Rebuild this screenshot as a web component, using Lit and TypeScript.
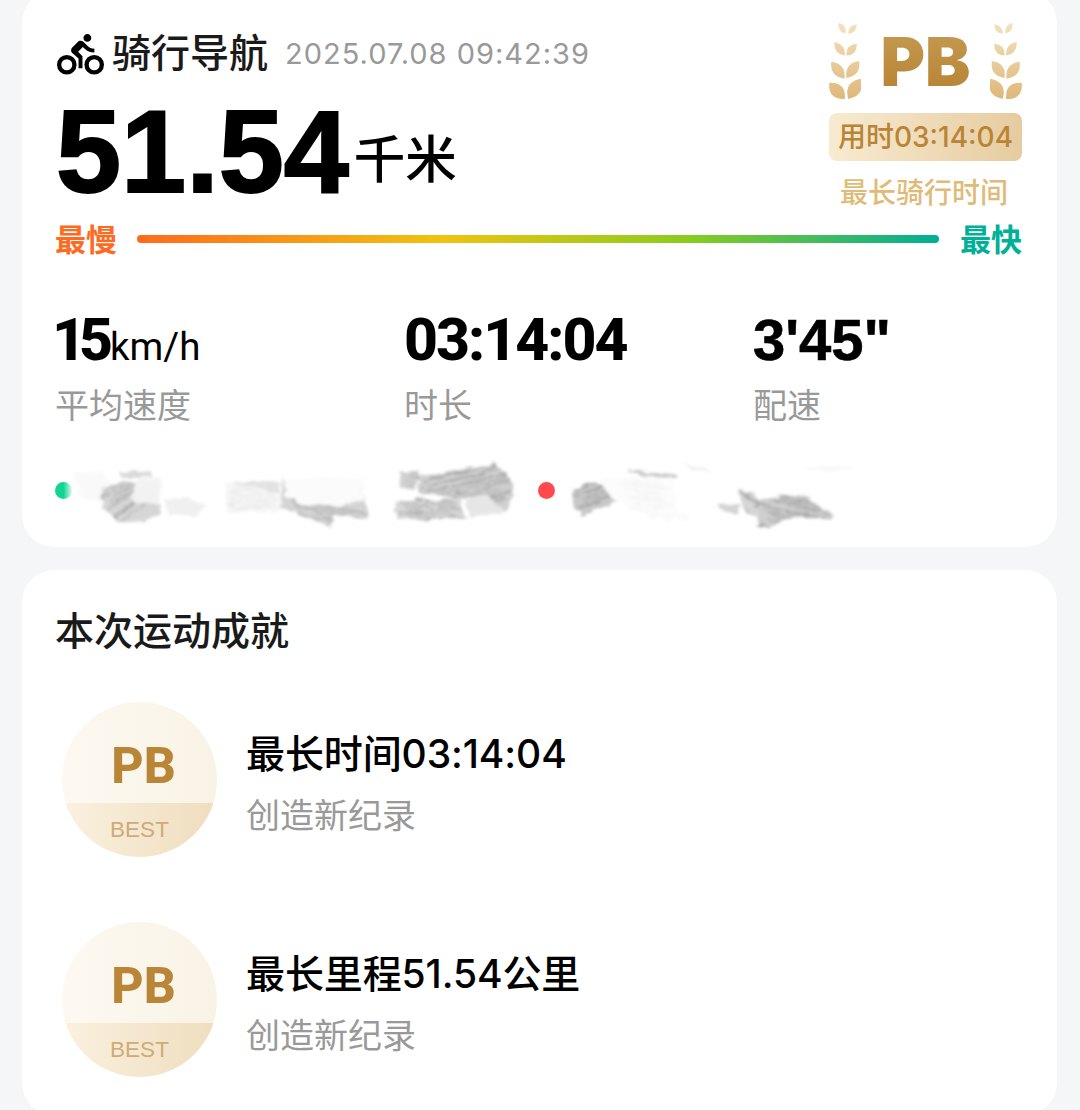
import { LitElement, html, css, svg } from "lit";
import { customElement } from "lit/decorators.js";

const leaf = (ax: number, ay: number, bx: number, by: number, w: number) => {
  const mx = (ax + bx) / 2, my = (ay + by) / 2;
  const dx = bx - ax, dy = by - ay;
  const l = Math.hypot(dx, dy);
  const nx = (-dy / l) * w, ny = (dx / l) * w;
  return `M${ax} ${ay}Q${mx + nx} ${my + ny} ${bx} ${by}Q${mx - nx} ${my - ny} ${ax} ${ay}Z`;
};

const leaves = [
  leaf(85, 40, 105, 72, 17),
  leaf(138, 45, 113, 73, 17),
  leaf(72, 97, 103, 137, 23),
  leaf(138, 102, 108, 137, 23),
  leaf(63, 155, 102, 205, 31),
  leaf(145, 153, 108, 203, 31),
  leaf(57, 217, 103, 265, 38),
  leaf(150, 205, 113, 265, 38),
].join("");

const wheat = (mirror: boolean, id: string) => html`
  <svg class="wheat ${mirror ? "flip" : ""}" viewBox="57 38 93 230">
    <defs>
      <linearGradient id=${id} x1="0" y1="0" x2="0" y2="1">
        <stop offset="0" stop-color="#f3e2bd"></stop>
        <stop offset="1" stop-color="#dfb87a"></stop>
      </linearGradient>
    </defs>
    <path d=${leaves} fill="url(#${id})"></path>
  </svg>
`;

type Patch = { p: string; f: string; h?: string; box?: number[]; s?: number };
const patches: Patch[] = [
  { p: "72,472 100,471 112,482 104,505 80,497", f: "#f9f9f9" },
  { p: "102,487 128,482 160,478 160,515 148,520 118,522 102,505", f: "#d6d6d6", h: "#afafaf", box: [100, 484, 160, 530], s: -0.7 },
  { p: "120,472 150,470 152,478 122,478", f: "#dadada" },
  { p: "134,480 160,478 160,503 134,503", f: "#f2f2f2" },
  { p: "165,500 190,497 210,506 195,516 168,514", f: "#f0f0f0" },
  { p: "225,484 280,481 281,512 226,512", f: "#f6f6f6", h: "#e8e8e8", box: [226, 484, 280, 512], s: -0.1 },
  { p: "228,482 278,481 280,494 262,488", f: "#e2e2e2" },
  { p: "282,478 360,478 368,512 368,520 335,515 330,526 280,506", f: "#d4d4d4", h: "#b0b0b0", box: [282, 498, 368, 524], s: 0.2 },
  { p: "284,478 360,477 364,500 345,506 300,504 285,496", f: "#fbfbfb" },
  { p: "400,470 420,470 415,490 400,489", f: "#d2d2d2", h: "#a9a9a9", box: [400, 470, 420, 490], s: 0.12 },
  { p: "394,502 420,500 460,498 465,518 396,520", f: "#d8d8d8", h: "#aaaaaa", box: [394, 500, 466, 520], s: 0.02 },
  { p: "418,476 450,472 495,463 512,482 514,490 507,512 480,515 475,500 418,494", f: "#d0d0d0", h: "#a8a8a8", box: [420, 470, 514, 520], s: -0.22 },
  { p: "465,498 488,495 505,512 470,518", f: "#e6e6e6" },
  { p: "572,490 592,482 612,490 616,502 582,516 575,510", f: "#c8c8c8", h: "#9f9f9f", box: [574, 484, 616, 520], s: -0.4 },
  { p: "600,480 672,476 678,512 640,512 614,500", f: "#fcfcfc", h: "#f2f2f2", box: [620, 480, 676, 510], s: 0.1 },
  { p: "626,470 675,474 675,478 640,477", f: "#c8c8c8" },
  { p: "684,464 710,468 712,472 692,470", f: "#f2f2f2" },
  { p: "716,503 740,505 738,514 718,511", f: "#d4d4d4" },
  { p: "737,488 752,492 770,510 760,518 744,510", f: "#d6d6d6", h: "#b0b0b0", box: [730, 486, 770, 500], s: 0.8 },
  { p: "760,498 800,495 835,514 832,521 795,516 770,528 758,526", f: "#cecece", h: "#a3a3a3", box: [758, 492, 836, 528], s: 0.22 },
  { p: "805,467 850,466 852,471 810,470", f: "#f8f8f8" },
  { p: "640,510 690,514 688,520 650,518", f: "#f9f9f9" },
];

const hatch = (x: Patch) => {
  if (!x.h || !x.box) return "";
  const [x0, y0, x1, y1] = x.box;
  let d = "";
  let seed = x0 * 7 + y0;
  for (let y = y0; y <= y1; y += 3) {
    seed = (seed * 31 + 17) % 101;
    const a = x0 + (seed % 14);
    const b = x1 - ((seed * 3) % 16);
    d += `M${a} ${y.toFixed(1)}L${b} ${(y + (b - a) * (x.s ?? 0)).toFixed(1)}`;
  }
  return d;
};

const track = html`
  <svg class="track" viewBox="55 455 805 75">
    <defs>
      <filter id="smear" x="-5%" y="-20%" width="110%" height="140%">
        <feTurbulence type="fractalNoise" baseFrequency="0.07 0.16" numOctaves="2" seed="4" result="n"></feTurbulence>
        <feDisplacementMap in="SourceGraphic" in2="n" scale="8" xChannelSelector="R" yChannelSelector="G" result="d"></feDisplacementMap>
        <feGaussianBlur in="d" stdDeviation="1.6"></feGaussianBlur>
      </filter>
      <linearGradient id="start" x1="0" y1="0" x2="1" y2="0">
        <stop offset="0.5" stop-color="#12d68f"></stop>
        <stop offset="1" stop-color="#12d68f" stop-opacity="0.15"></stop>
      </linearGradient>
      ${patches.map((x, i) => svg`<clipPath id=${"c" + i}><polygon points=${x.p}></polygon></clipPath>`)}
    </defs>
    <g filter="url(#smear)">
      ${patches.map(
        (x, i) => svg`
          <g clip-path=${"url(#c" + i + ")"}>
            <polygon points=${x.p} fill=${x.f}></polygon>
            <path d=${hatch(x)} stroke=${x.h ?? "none"} stroke-width="1.2" fill="none"></path>
          </g>
        `
      )}
    </g>
    <circle cx="63.5" cy="490.5" r="8.5" fill="url(#start)"></circle>
    <circle cx="546.5" cy="490.5" r="8.5" fill="#ff4a4d"></circle>
  </svg>
`;

const bike = html`
  <svg class="bike" viewBox="0 0 24 22.4">
    <path
      d="M15.5 5.5c1.1 0 2-.9 2-2s-.9-2-2-2-2 .9-2 2 .9 2 2 2zM10.8 10.5l2.4-2.4.8.8c1.3 1.3 3 2.1 5.1 2.1V9c-1.5 0-2.7-.6-3.6-1.5l-1.9-1.9c-.5-.4-1-.6-1.6-.6s-1.1.2-1.4.6L7.8 8.4c-.4.4-.6.9-.6 1.4 0 .6.2 1.1.6 1.4L11 14v5h2v-6.2l-2.2-2.3z"
      fill="#000"
    ></path>
    <circle cx="5" cy="17.2" r="3.9" fill="none" stroke="#000" stroke-width="2.2"></circle>
    <circle cx="19" cy="17.2" r="3.9" fill="none" stroke="#000" stroke-width="2.2"></circle>
  </svg>
`;

@customElement("app-root")
export class AppRoot extends LitElement {
  static styles = css`
    :host {
      display: block;
      width: 1080px;
      height: 1110px;
      overflow: hidden;
      background: #f5f6f8;
      font-family: Inter, "Noto Sans CJK SC", sans-serif;
      color: #000;
    }
    .page {
      display: flex;
      flex-direction: column;
      gap: 23px;
      padding: 0 23px 0 22px;
      margin-top: -9px;
    }
    .card {
      background: #fff;
      border-radius: 32px;
      padding: 0 35px 0 33px;
    }
    .summary {
      padding-top: 31px;
      height: 556px;
      box-sizing: border-box;
    }
    .top {
      display: flex;
      justify-content: space-between;
      height: 200px;
    }
    .head {
      display: flex;
      align-items: center;
      height: 46px;
      margin-top: 8px;
    }
    .bike {
      width: 47px;
      height: 44px;
      margin: 0 8px 0 2px;
      flex: none;
    }
    .name {
      font-size: 39px;
      font-weight: 500;
      line-height: 46px;
      color: #1a1a1a;
      white-space: nowrap;
    }
    .date {
      margin-left: 17px;
      font-size: 29px;
      line-height: 46px;
      color: #999;
      letter-spacing: 1px;
      white-space: nowrap;
      position: relative;
      top: 1px;
    }
    .dist {
      display: flex;
      align-items: baseline;
      margin-top: 21px;
      height: 110px;
    }
    .num {
      font-family: "Liberation Sans", sans-serif;
      font-size: 117px;
      font-weight: 700;
      font-kerning: none;
      line-height: 110px;
      -webkit-text-stroke: 2px #000;
      margin-left: 1px;
    }
    .unit {
      font-size: 51.5px;
      font-weight: 500;
      line-height: 50px;
      margin-left: 5px;
      position: relative;
      top: -14px;
    }
    .pb {
      width: 193px;
      display: flex;
      flex-direction: column;
      align-items: center;
    }
    .crest {
      width: 193px;
      height: 78px;
      display: flex;
      justify-content: space-between;
      align-items: center;
    }
    .wheat {
      width: 32px;
      height: 78px;
      flex: none;
    }
    .flip {
      transform: scaleX(-1);
    }
    .pbt {
      font-family: Inter, sans-serif;
      font-size: 68px;
      font-weight: 900;
      line-height: 78px;
      background: linear-gradient(180deg, #c69c56, #b5812f);
      -webkit-background-clip: text;
      background-clip: text;
      color: transparent;
    }
    .used {
      width: 193px;
      height: 48px;
      margin-top: 13px;
      border-radius: 8px;
      background: linear-gradient(90deg, #f8ebd1, #e6cb9f);
      color: #b98436;
      font-size: 28px;
      font-weight: 500;
      line-height: 48px;
      text-align: center;
      white-space: nowrap;
    }
    .best {
      margin: 15px 3px 0 0;
      color: #e0bb78;
      font-size: 28px;
      font-weight: 500;
      line-height: 34px;
      white-space: nowrap;
    }
    .scale {
      display: flex;
      align-items: center;
      justify-content: space-between;
      height: 34px;
      font-size: 31px;
      font-weight: 700;
      line-height: 34px;
    }
    .scale span {
      position: relative;
      top: 1px;
    }
    .slow { color: #ff6a22; }
    .fast { color: #00b097; }
    .bar {
      width: 802px;
      height: 8px;
      margin-right: 1px;
      border-radius: 4px;
      background: linear-gradient(90deg, #ff6a1c 0%, #f0c30f 38%, #8ccc1e 68%, #00ae96 100%);
    }
    .stats {
      display: grid;
      grid-template-columns: 349px 349px 1fr;
      margin-top: 54px;
    }
    .val {
      height: 60px;
      font-family: Roboto, sans-serif;
      font-size: 59px;
      font-weight: 800;
      line-height: 60px;
      letter-spacing: -2px;
      white-space: nowrap;
    }
    .val b {
      font-weight: 800;
      letter-spacing: -7px;
      margin: 0 4px 0 -3px;
    }
    .val small {
      font-family: Roboto, sans-serif;
      font-size: 38.5px;
      font-weight: 400;
      letter-spacing: 0;
    }
    .val.pace {
      font-family: "Liberation Sans", sans-serif;
      font-size: 58px;
      font-weight: 700;
      letter-spacing: 0;
      -webkit-text-stroke: 0.6px #000;
    }
    .lab {
      margin-top: 13px;
      font-size: 34px;
      line-height: 46px;
      color: #999;
    }
    .track {
      display: block;
      width: 805px;
      height: 75px;
      margin-top: 26px;
    }
    .ach {
      height: 545px;
      padding-top: 36px;
      box-sizing: border-box;
    }
    .ach h2 {
      margin: 0;
      font-size: 39px;
      font-weight: 500;
      line-height: 50px;
      color: #1a1a1a;
    }
    .list {
      display: flex;
      flex-direction: column;
      gap: 65px;
      margin: 46px 0 0 7px;
    }
    .item {
      display: flex;
      align-items: flex-start;
      gap: 29px;
    }
    .medal {
      width: 155px;
      height: 155px;
      flex: none;
      border-radius: 50%;
      overflow: hidden;
      display: flex;
      flex-direction: column;
      align-items: center;
      background: linear-gradient(90deg, #fdf9f1, #f9f3e6);
    }
    .mpb {
      height: 101px;
      width: 100%;
      box-sizing: border-box;
      padding-left: 8px;
      text-align: center;
      font-family: Roboto, sans-serif;
      font-weight: 800;
      font-size: 50px;
      line-height: 129px;
      color: #b98536;
    }
    .mbest {
      flex: 1;
      width: 100%;
      text-align: center;
      font-family: "Liberation Sans", sans-serif;
      font-size: 22.5px;
      line-height: 54px;
      color: #cfab78;
      background: linear-gradient(90deg, #faf1e0, #efddbd);
    }
    .txt {
      padding-top: 26px;
    }
    .tt {
      font-size: 39px;
      font-weight: 500;
      line-height: 52px;
      letter-spacing: -0.1px;
      color: #000;
      white-space: nowrap;
    }
    .ts {
      margin-top: 13px;
      font-size: 34px;
      line-height: 46px;
      color: #999;
    }
  `;

  private medal() {
    return html`<div class="medal"><div class="mpb">PB</div><div class="mbest">BEST</div></div>`;
  }

  render() {
    return html`
      <div class="page">
        <section class="card summary">
          <div class="top">
            <div>
              <div class="head">${bike}<span class="name">骑行导航</span><span class="date">2025.07.08 09:42:39</span></div>
              <div class="dist"><span class="num">51.54</span><span class="unit">千米</span></div>
            </div>
            <div class="pb">
              <div class="crest">${wheat(false, "w1")}<span class="pbt">PB</span>${wheat(true, "w2")}</div>
              <div class="used">用时03:14:04</div>
              <div class="best">最长骑行时间</div>
            </div>
          </div>
          <div class="scale"><span class="slow">最慢</span><div class="bar"></div><span class="fast">最快</span></div>
          <div class="stats">
            <div><div class="val"><b>15</b><small>km/h</small></div><div class="lab">平均速度</div></div>
            <div><div class="val">03:14:04</div><div class="lab">时长</div></div>
            <div><div class="val pace">3'45"</div><div class="lab">配速</div></div>
          </div>
          ${track}
        </section>
        <section class="card ach">
          <h2>本次运动成就</h2>
          <div class="list">
            <div class="item">${this.medal()}<div class="txt"><div class="tt">最长时间03:14:04</div><div class="ts">创造新纪录</div></div></div>
            <div class="item">${this.medal()}<div class="txt"><div class="tt">最长里程51.54公里</div><div class="ts">创造新纪录</div></div></div>
          </div>
        </section>
      </div>
    `;
  }
}
